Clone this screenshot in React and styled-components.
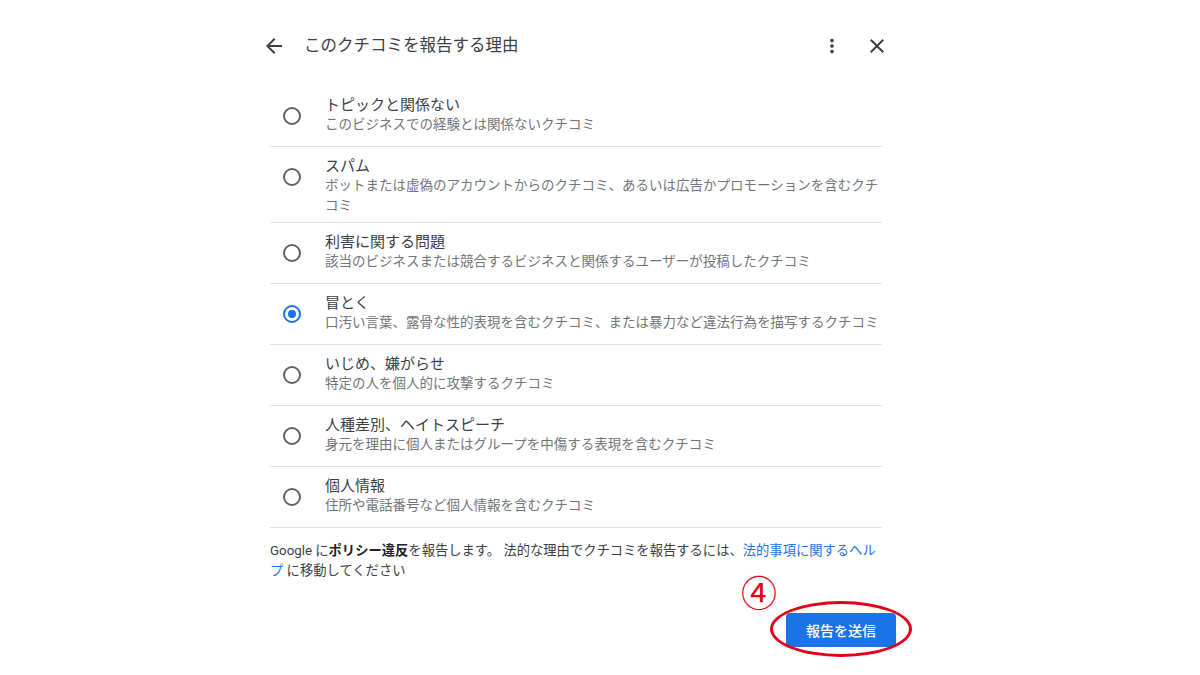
import React from "react";
import styled, { createGlobalStyle } from "styled-components";

const Global = createGlobalStyle`
  html, body { margin: 0; padding: 0; background: #ffffff; }
  body { font-family: Roboto, "Noto Sans CJK JP", sans-serif; color: #3c4043; }
`;

const Page = styled.div`
  width: 1200px;
  height: 675px;
  box-sizing: border-box;
  padding: 34px 0 0 270px;
  overflow: hidden;
`;

const Dialog = styled.div`
  width: 612px;
  display: flex;
  flex-direction: column;
`;

const Header = styled.div`
  display: flex;
  align-items: center;
  height: 24px;
  margin: 0 -7px 0 -8px;
`;

const IconButton = styled.div`
  width: 24px;
  height: 24px;
  display: flex;
  align-items: center;
  justify-content: center;
  color: #3c4043;
  flex: none;
  margin-left: ${(p) => p.$gap || 0}px;
`;

const Title = styled.div`
  flex: 1;
  margin-left: 18px;
  font-size: 16.5px;
  line-height: 24px;
  color: #3c4043;
  white-space: nowrap;
`;

const List = styled.div`
  margin-top: 28px;
  display: flex;
  flex-direction: column;
`;

const Row = styled.div`
  display: flex;
  align-items: flex-start;
  box-sizing: border-box;
  min-height: 61px;
  padding: 9px 0 7px 13px;
  border-bottom: 1px solid #e0e0e0;
`;

const Radio = styled.div`
  flex: none;
  width: 18px;
  height: 18px;
  box-sizing: border-box;
  border-radius: 50%;
  border: 2px solid ${(p) => (p.$checked ? "#1a73e8" : "#5f6368")};
  margin-top: 12px;
  display: flex;
  align-items: center;
  justify-content: center;
  &::after {
    content: "";
    width: 8px;
    height: 8px;
    border-radius: 50%;
    background: #1a73e8;
    display: ${(p) => (p.$checked ? "block" : "none")};
  }
`;

const Texts = styled.div`
  margin-left: 24px;
  width: 557px;
  display: flex;
  flex-direction: column;
`;

const OptTitle = styled.div`
  font-size: 15px;
  line-height: 20px;
  color: #3c4043;
`;

const OptDesc = styled.div`
  font-size: 13.5px;
  line-height: 19.5px;
  color: #70757a;
`;

const Footer = styled.div`
  margin-top: 13px;
  font-size: 13.3px;
  line-height: 20px;
  color: #3c4043;
  width: 614px;
`;

const Bold = styled.b`
  font-weight: 700;
  color: #202124;
`;

const Link = styled.a`
  color: #1a73e8;
  text-decoration: none;
`;

const Actions = styled.div`
  display: flex;
  justify-content: flex-end;
  margin-top: 32px;
  margin-right: -14px;
`;

const ButtonWrap = styled.div`
  position: relative;
`;

const PrimaryButton = styled.button`
  display: block;
  height: 34px;
  padding: 0 20px;
  border: none;
  border-radius: 4px;
  background: #1a73e8;
  color: #ffffff;
  font-family: Roboto, "Noto Sans CJK JP", sans-serif;
  font-size: 14px;
  font-weight: 500;
  cursor: pointer;
`;

const Ellipse = styled.div`
  position: absolute;
  left: -16px;
  top: -12px;
  width: 142px;
  height: 56px;
  box-sizing: border-box;
  border: 3px solid #e2001a;
  border-radius: 50%;
  pointer-events: none;
`;

const StepMark = styled.div`
  position: absolute;
  left: -47px;
  top: -42px;
  width: 40px;
  height: 40px;
  display: flex;
  align-items: center;
  justify-content: center;
  font-family: "Noto Sans CJK JP", sans-serif;
  font-size: 36px;
  line-height: 40px;
  color: #e2001a;
`;

const options = [
  { t: "トピックと関係ない", d: "このビジネスでの経験とは関係ないクチコミ" },
  { t: "スパム", d: "ボットまたは虚偽のアカウントからのクチコミ、あるいは広告かプロモーションを含むクチコミ" },
  { t: "利害に関する問題", d: "該当のビジネスまたは競合するビジネスと関係するユーザーが投稿したクチコミ" },
  { t: "冒とく", d: "口汚い言葉、露骨な性的表現を含むクチコミ、または暴力など違法行為を描写するクチコミ", checked: true },
  { t: "いじめ、嫌がらせ", d: "特定の人を個人的に攻撃するクチコミ" },
  { t: "人種差別、ヘイトスピーチ", d: "身元を理由に個人またはグループを中傷する表現を含むクチコミ" },
  { t: "個人情報", d: "住所や電話番号など個人情報を含むクチコミ" },
];

const BackIcon = () => (
  <svg width="24" height="24" viewBox="0 0 24 24" fill="currentColor">
    <path d="M20 11H7.83l5.59-5.59L12 4l-8 8 8 8 1.41-1.41L7.83 13H20v-2z" />
  </svg>
);

const MoreIcon = () => (
  <svg width="22" height="22" viewBox="0 0 24 24" fill="currentColor">
    <path d="M12 8c1.1 0 2-.9 2-2s-.9-2-2-2-2 .9-2 2 .9 2 2 2zm0 2c-1.1 0-2 .9-2 2s.9 2 2 2 2-.9 2-2-.9-2-2-2zm0 6c-1.1 0-2 .9-2 2s.9 2 2 2 2-.9 2-2-.9-2-2-2z" />
  </svg>
);

const CloseIcon = () => (
  <svg width="24" height="24" viewBox="0 0 24 24" fill="currentColor">
    <path d="M19 6.41L17.59 5 12 10.59 6.41 5 5 6.41 10.59 12 5 17.59 6.41 19 12 13.41 17.59 19 19 17.59 13.41 12z" />
  </svg>
);

export default function App() {
  return (
    <>
      <Global />
      <Page>
        <Dialog>
          <Header>
            <IconButton><BackIcon /></IconButton>
            <Title>このクチコミを報告する理由</Title>
            <IconButton><MoreIcon /></IconButton>
            <IconButton $gap={21}><CloseIcon /></IconButton>
          </Header>
          <List>
            {options.map((o) => (
              <Row key={o.t}>
                <Radio $checked={!!o.checked} />
                <Texts>
                  <OptTitle>{o.t}</OptTitle>
                  <OptDesc>{o.d}</OptDesc>
                </Texts>
              </Row>
            ))}
          </List>
          <Footer>
            Google に<Bold>ポリシー違反</Bold>を報告します。 法的な理由でクチコミを報告するには、<Link href="#">法的事項に関するヘルプ</Link> に移動してください
          </Footer>
          <Actions>
            <ButtonWrap>
              <StepMark>④</StepMark>
              <PrimaryButton>報告を送信</PrimaryButton>
              <Ellipse />
            </ButtonWrap>
          </Actions>
        </Dialog>
      </Page>
    </>
  );
}
